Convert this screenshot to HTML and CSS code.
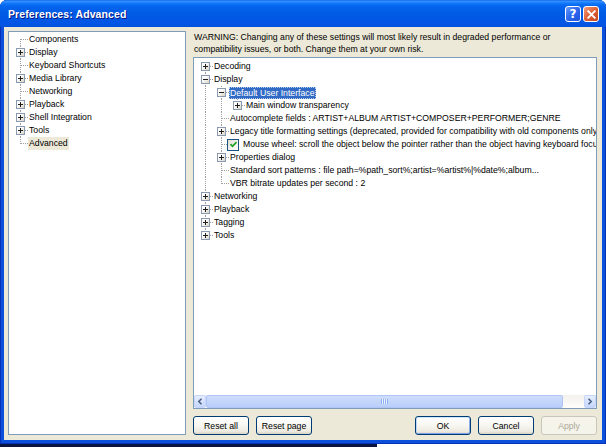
FILE: index.html
```html
<!DOCTYPE html>
<html>
<head>
<meta charset="utf-8">
<title>Preferences: Advanced</title>
<link rel="stylesheet" href="styles.css">
</head>
<body>
<div class="window">
  <div class="titlebar">
    <span class="title">Preferences: Advanced</span>
    <div class="caption-buttons">
      <span class="cap-btn help">?</span>
      <span class="cap-btn close"><svg width="9" height="9" viewBox="0 0 9 9"><path d="M1.2 1.2L7.8 7.8M7.8 1.2L1.2 7.8" stroke="#fff" stroke-width="1.8" stroke-linecap="square"/></svg></span>
    </div>
  </div>
  <div class="client">
    <div class="tree left-tree">
      <div class="row"><span class="cell c-first"></span><span class="label">Components</span></div>
      <div class="row"><span class="cell c-mid"><i class="exp plus"></i></span><span class="label">Display</span></div>
      <div class="row"><span class="cell c-mid"></span><span class="label">Keyboard Shortcuts</span></div>
      <div class="row"><span class="cell c-mid"><i class="exp plus"></i></span><span class="label">Media Library</span></div>
      <div class="row"><span class="cell c-mid"></span><span class="label">Networking</span></div>
      <div class="row"><span class="cell c-mid"><i class="exp plus"></i></span><span class="label">Playback</span></div>
      <div class="row"><span class="cell c-mid"><i class="exp plus"></i></span><span class="label">Shell Integration</span></div>
      <div class="row"><span class="cell c-mid"><i class="exp plus"></i></span><span class="label">Tools</span></div>
      <div class="row"><span class="cell c-last"></span><span class="label sel-inactive">Advanced</span></div>
    </div>
    <div class="right">
      <p class="warning">WARNING: Changing any of these settings will most likely result in degraded performance or<br>compatibility issues, or both. Change them at your own risk.</p>
      <div class="listbox">
        <div class="tree right-tree">
          <div class="row"><span class="cell c-first"><i class="exp plus"></i></span><span class="label">Decoding</span></div>
          <div class="row"><span class="cell c-mid"><i class="exp minus"></i></span><span class="label">Display</span></div>
          <div class="row"><span class="cell c-pass"></span><span class="cell c-mid"><i class="exp minus"></i></span><span class="label sel">Default User Interface</span></div>
          <div class="row"><span class="cell c-pass"></span><span class="cell c-pass"></span><span class="cell c-last"><i class="exp plus"></i></span><span class="label">Main window transparency</span></div>
          <div class="row"><span class="cell c-pass"></span><span class="cell c-mid"></span><span class="label">Autocomplete fields : ARTIST+ALBUM ARTIST+COMPOSER+PERFORMER;GENRE</span></div>
          <div class="row"><span class="cell c-pass"></span><span class="cell c-mid"><i class="exp plus"></i></span><span class="label">Legacy title formatting settings (deprecated, provided for compatibility with old components only)</span></div>
          <div class="row"><span class="cell c-pass"></span><span class="cell c-mid"></span><span class="check"><svg width="9" height="9" viewBox="0 0 9 9"><path d="M1.5 4.2L3.5 6.3L7.5 2.2" fill="none" stroke="#21A121" stroke-width="1.8"/></svg></span><span class="label">Mouse wheel: scroll the object below the pointer rather than the object having keyboard focus</span></div>
          <div class="row"><span class="cell c-pass"></span><span class="cell c-mid"><i class="exp plus"></i></span><span class="label">Properties dialog</span></div>
          <div class="row"><span class="cell c-pass"></span><span class="cell c-mid"></span><span class="label">Standard sort patterns : file path=%path_sort%;artist=%artist%|%date%;album...</span></div>
          <div class="row"><span class="cell c-pass"></span><span class="cell c-last"></span><span class="label">VBR bitrate updates per second : 2</span></div>
          <div class="row"><span class="cell c-mid"><i class="exp plus"></i></span><span class="label">Networking</span></div>
          <div class="row"><span class="cell c-mid"><i class="exp plus"></i></span><span class="label">Playback</span></div>
          <div class="row"><span class="cell c-mid"><i class="exp plus"></i></span><span class="label">Tagging</span></div>
          <div class="row"><span class="cell c-last"><i class="exp plus"></i></span><span class="label">Tools</span></div>
        </div>
        <div class="hscroll">
          <span class="sb-btn"><svg width="6" height="7" viewBox="0 0 6 7"><path d="M4.5 0.8L1.8 3.5L4.5 6.2" fill="none" stroke="#4D6185" stroke-width="1.6"/></svg></span>
          <div class="sb-track"><div class="sb-thumb"><span class="grip"></span></div></div>
          <span class="sb-btn"><svg width="6" height="7" viewBox="0 0 6 7"><path d="M1.5 0.8L4.2 3.5L1.5 6.2" fill="none" stroke="#4D6185" stroke-width="1.6"/></svg></span>
        </div>
      </div>
      <div class="buttons">
        <button class="btn">Reset all</button>
        <button class="btn">Reset page</button>
        <span class="spacer"></span>
        <button class="btn default">OK</button>
        <button class="btn">Cancel</button>
        <button class="btn" disabled>Apply</button>
      </div>
    </div>
  </div>
</div>
<div class="screen-edge"></div>
</body>
</html>
```

FILE: styles.css
```css
html, body {
  margin: 0;
  padding: 0;
  background: #ffffff;
}
body {
  width: 606px;
  height: 447px;
  overflow: hidden;
  font-family: "Liberation Sans", Arial, sans-serif;
  font-size: 8.7px;
  color: #000;
}
.window {
  width: 606px;
  height: 444px;
  box-sizing: border-box;
  display: flex;
  flex-direction: column;
  background: #0B4FDD;
  border-radius: 7px 7px 0 0;
  box-shadow: inset 0 0 0 1px #0831B8;
}
.titlebar {
  height: 27px;
  flex: none;
  display: flex;
  align-items: center;
  padding: 0 7px 0 8px;
  border-radius: 7px 7px 0 0;
  background: linear-gradient(#0A5AE8 0%, #3B95FF 4%, #2387FF 8%, #0F73F8 14%, #0466EE 22%, #025CE6 45%, #0157E3 70%, #0256E6 88%, #0250D8 100%);
}
.title {
  flex: 1;
  color: #fff;
  font-weight: bold;
  font-size: 10.5px;
  text-shadow: 1px 1px 0 #0A1883;
  letter-spacing: 0.1px;
}
.caption-buttons {
  display: flex;
  gap: 2px;
  margin-top: 1px;
}
.cap-btn {
  width: 16px;
  height: 16px;
  box-sizing: border-box;
  border: 1px solid #fff;
  border-radius: 3px;
  display: flex;
  align-items: center;
  justify-content: center;
}
.help {
  background: linear-gradient(135deg, #6E9CF8 0%, #2F6AF0 45%, #1E52DC 100%);
  color: #fff;
  font-weight: bold;
  font-size: 12px;
  font-family: "DejaVu Sans", sans-serif;
}
.close {
  background: linear-gradient(135deg, #F2A080 0%, #E0643C 45%, #C3441E 100%);
}
.client {
  flex: 1;
  margin: 0 4px 4px 4px;
  background: #ECE9D8;
  display: flex;
  gap: 7px;
  padding: 4px 5px 5px 4px;
  box-sizing: border-box;
}
.tree {
  background: #fff;
  overflow: hidden;
  box-sizing: border-box;
}
.left-tree {
  width: 178px;
  flex: none;
  border: 1px solid #7F9DB9;
  padding: 1px 0 0 3px;
}
.row {
  display: flex;
  align-items: center;
  height: 13px;
  white-space: nowrap;
}
.cell {
  width: 16px;
  height: 13px;
  flex: none;
  display: flex;
  align-items: center;
  padding-left: 4px;
  box-sizing: border-box;
}
.c-mid {
  background:
    repeating-linear-gradient(to right, #A0A0A0 0 1px, transparent 1px 2px) 9px 6px / 7px 1px no-repeat,
    repeating-linear-gradient(to bottom, #A0A0A0 0 1px, transparent 1px 2px) 8px 0 / 1px 13px no-repeat;
}
.c-first {
  background:
    repeating-linear-gradient(to right, #A0A0A0 0 1px, transparent 1px 2px) 9px 6px / 7px 1px no-repeat,
    repeating-linear-gradient(to bottom, #A0A0A0 0 1px, transparent 1px 2px) 8px 6px / 1px 7px no-repeat;
}
.c-last {
  background:
    repeating-linear-gradient(to right, #A0A0A0 0 1px, transparent 1px 2px) 9px 6px / 7px 1px no-repeat,
    repeating-linear-gradient(to bottom, #A0A0A0 0 1px, transparent 1px 2px) 8px 0 / 1px 7px no-repeat;
}
.c-pass {
  background:
    repeating-linear-gradient(to bottom, #A0A0A0 0 1px, transparent 1px 2px) 8px 0 / 1px 13px no-repeat;
}
.exp {
  width: 9px;
  height: 9px;
  box-sizing: border-box;
  border: 1px solid #8A9AB0;
  display: block;
}
.exp.plus {
  background:
    linear-gradient(#1E1E1E, #1E1E1E) 1px 3px / 5px 1px no-repeat,
    linear-gradient(#1E1E1E, #1E1E1E) 3px 1px / 1px 5px no-repeat,
    linear-gradient(135deg, #FFFFFF 30%, #D8D4C6 100%);
}
.exp.minus {
  background:
    linear-gradient(#1E1E1E, #1E1E1E) 1px 3px / 5px 1px no-repeat,
    linear-gradient(135deg, #FFFFFF 30%, #D8D4C6 100%);
}
.label {
  padding: 0 1px;
  line-height: 13px;
  height: 13px;
}
.sel-inactive {
  background: #ECE9D8;
}
.sel {
  background: #316AC5;
  color: #fff;
  outline: 1px dotted #B9CCEC;
  outline-offset: -1px;
  line-height: 12px;
  height: 12px;
}
.check {
  width: 12px;
  height: 12px;
  flex: none;
  box-sizing: border-box;
  border: 1px solid #1C5180;
  background: linear-gradient(135deg, #DCDCD6 0%, #F4F4F0 60%, #FFFFFF 100%);
  display: flex;
  align-items: center;
  justify-content: center;
  margin: 0 3px 0 -2px;
}
.right {
  flex: 1;
  display: flex;
  flex-direction: column;
  min-width: 0;
}
.warning {
  margin: 0 0 2px 1px;
  line-height: 12px;
  white-space: nowrap;
}
.listbox {
  flex: 1;
  border: 1px solid #7F9DB9;
  background: #fff;
  display: flex;
  flex-direction: column;
  min-height: 0;
}
.right-tree {
  flex: 1;
  padding: 2px 0 0 3px;
}
.hscroll {
  height: 13px;
  flex: none;
  display: flex;
  background: linear-gradient(#F3F1EC, #FEFEFB);
}
.sb-btn {
  width: 12px;
  height: 13px;
  flex: none;
  box-sizing: border-box;
  border: 1px solid #C5D5FB;
  border-radius: 2px;
  background: linear-gradient(#E6EEFE, #C5D6FC);
  display: flex;
  align-items: center;
  justify-content: center;
}
.sb-track {
  flex: 1;
  display: flex;
}
.sb-thumb {
  width: 94.5%;
  box-sizing: border-box;
  border: 1px solid #AFC5F5;
  border-radius: 2px;
  background: linear-gradient(#CFDDFC, #B9CEFA);
  display: flex;
  align-items: center;
  justify-content: center;
}
.grip {
  width: 7px;
  height: 5px;
  background: repeating-linear-gradient(to right, #8DAEF4 0 1px, #EEF4FE 1px 2px);
}
.buttons {
  display: flex;
  gap: 7px;
  margin-top: 7px;
  height: 19px;
  flex: none;
}
.spacer {
  flex: 1;
}
.btn {
  width: 56px;
  height: 19px;
  padding: 0;
  margin: 0;
  font-family: "Liberation Sans", Arial, sans-serif;
  font-size: 8.7px;
  color: #000;
  border: 1px solid #003C74;
  border-radius: 3px;
  background: linear-gradient(#FFFFFF 0%, #F7F6F1 50%, #ECEAE0 85%, #D8D2C2 100%);
}
.btn.default {
  box-shadow: inset 0 1px 0 #CEE7FF, inset 1px 0 0 #BCD6FA, inset -1px 0 0 #8DAFEA, inset 0 -1px 0 #7E9EE6;
}
.btn:disabled {
  border-color: #C9C7BA;
  color: #ACA899;
  background: #F5F4EA;
}
.screen-edge {
  width: 377px;
  height: 3px;
  background: #0B1640;
}
```
